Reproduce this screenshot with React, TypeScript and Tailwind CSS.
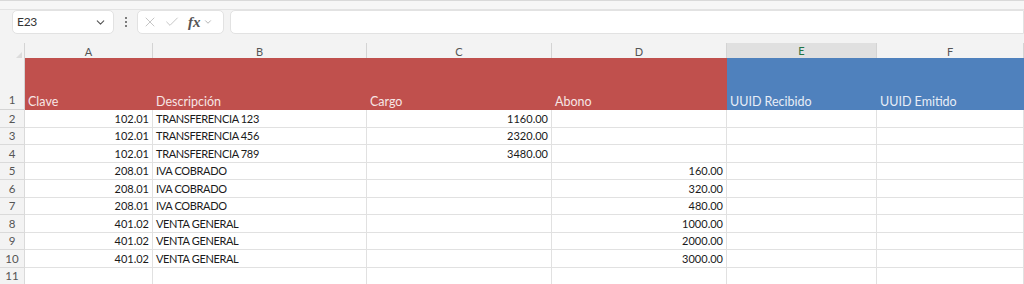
import { ChevronDown, X, Check } from "lucide-react";

type Row = {
  n: number;
  clave?: string;
  desc?: string;
  cargo?: string;
  abono?: string;
};

const rows: Row[] = [
  { n: 2, clave: "102.01", desc: "TRANSFERENCIA 123", cargo: "1160.00" },
  { n: 3, clave: "102.01", desc: "TRANSFERENCIA 456", cargo: "2320.00" },
  { n: 4, clave: "102.01", desc: "TRANSFERENCIA 789", cargo: "3480.00" },
  { n: 5, clave: "208.01", desc: "IVA COBRADO", abono: "160.00" },
  { n: 6, clave: "208.01", desc: "IVA COBRADO", abono: "320.00" },
  { n: 7, clave: "208.01", desc: "IVA COBRADO", abono: "480.00" },
  { n: 8, clave: "401.02", desc: "VENTA GENERAL", abono: "1000.00" },
  { n: 9, clave: "401.02", desc: "VENTA GENERAL", abono: "2000.00" },
  { n: 10, clave: "401.02", desc: "VENTA GENERAL", abono: "3000.00" },
  { n: 11 },
];

const cols = ["A", "B", "C", "D", "E", "F"];

// row numbers, A, B, C, D, E, F
const gridCols = "grid grid-cols-[25px_128px_214px_185px_175px_150px_1fr]";

function Cell({ children, right, tight }: { children?: React.ReactNode; right?: boolean; tight?: boolean }) {
  return (
    <div
      className={`h-[17.5px] border-b border-r border-[#e1e1e1] bg-white px-[3px] flex items-center text-[11px] leading-none text-[#1a1a1a] whitespace-nowrap overflow-hidden ${
        right ? "justify-end" : ""
      } ${tight ? "tracking-[-0.35px]" : ""}`}
    >
      {children}
    </div>
  );
}

export default function App() {
  return (
    <div className="w-[1024px] h-[284px] overflow-hidden bg-[#f3f3f3] font-['Lato','Liberation_Sans',sans-serif]">
      {/* ribbon edge */}
      <div className="h-[10px] border-t border-[#d9d9d9] bg-[#f6f6f6] border-b border-b-[#e3e3e3]" />

      {/* formula bar */}
      <div className="flex items-center h-[24px] pl-[12px]">
        <div className="w-[102px] h-[24px] bg-white border border-[#e2e2e2] rounded-[5px] flex items-center justify-between pl-[4px] pr-[6px]">
          <span className="text-[12px] text-[#333] tracking-[-0.3px]">E23</span>
          <ChevronDown className="w-[13px] h-[13px] text-[#555]" strokeWidth={2} />
        </div>
        <div className="w-[23px] flex flex-col items-center justify-center gap-[2px]">
          <span className="w-[2px] h-[2px] bg-[#555] rounded-full" />
          <span className="w-[2px] h-[2px] bg-[#555] rounded-full" />
          <span className="w-[2px] h-[2px] bg-[#555] rounded-full" />
        </div>
        <div className="w-[87px] h-[24px] bg-white border border-[#e2e2e2] rounded-[5px] flex items-center pl-[4px] gap-[6px]">
          <X className="w-[16px] h-[16px] text-[#bdbdbd]" strokeWidth={1.3} />
          <Check className="w-[16px] h-[16px] text-[#bdbdbd]" strokeWidth={1.3} />
          <span className="font-['Liberation_Serif',serif] italic font-bold text-[15px] text-[#555] leading-none ml-[2px]">
            fx
          </span>
          <ChevronDown className="w-[10px] h-[10px] text-[#888] -ml-[4px]" strokeWidth={1.5} />
        </div>
        <div className="ml-[6px] flex-1 h-[24px] bg-white border border-[#e2e2e2] rounded-l-[5px]" />
      </div>

      {/* sheet */}
      <div className="mt-[9px]">
        {/* column headers */}
        <div className={`${gridCols} h-[15px]`}>
          <div className="border-r border-b border-[#d4d4d4] bg-[#f3f3f3] flex items-end justify-end pr-[2px] pb-[2px]">
            <div className="w-0 h-0 border-l-[7px] border-l-transparent border-b-[7px] border-b-[#dcdcdc]" />
          </div>
          {cols.map((c) => (
            <div
              key={c}
              className={
                c === "E"
                  ? "bg-[#e0e0e0] border-r border-[#d4d4d4] border-b-2 border-b-[#217346] flex items-center justify-center text-[11px] text-[#217346]"
                  : "bg-[#f3f3f3] border-r border-b border-[#d4d4d4] flex items-center justify-center text-[11px] text-[#555]"
              }
            >
              {c}
            </div>
          ))}
        </div>

        {/* row 1 */}
        <div className={`${gridCols} h-[52px]`}>
          <div className="bg-[#f3f3f3] border-r border-b border-[#d4d4d4] flex items-end justify-center pb-[1px] text-[11.5px] text-[#555]">
            1
          </div>
          <div className="col-span-4 bg-[#c0504d] grid grid-cols-[128px_214px_185px_175px] text-[12.5px] leading-[16px] text-[#f7e6e5] items-end">
            <span className="pl-[3px]">Clave</span>
            <span className="pl-[3px]">Descripción</span>
            <span className="pl-[3px]">Cargo</span>
            <span className="pl-[3px]">Abono</span>
          </div>
          <div className="col-span-2 bg-[#4f81bd] grid grid-cols-[150px_1fr] text-[12.5px] leading-[16px] text-[#e8eef7] items-end">
            <span className="pl-[3px]">UUID Recibido</span>
            <span className="pl-[3px]">UUID Emitido</span>
          </div>
        </div>

        {/* data rows */}
        {rows.map((r) => (
          <div key={r.n} className={gridCols}>
            <div className="h-[17.5px] bg-[#f3f3f3] border-r border-b border-[#dadada] flex items-center justify-center text-[11.5px] text-[#555]">
              {r.n}
            </div>
            <Cell right>{r.clave}</Cell>
            <Cell tight>{r.desc}</Cell>
            <Cell right>{r.cargo}</Cell>
            <Cell right>{r.abono}</Cell>
            <Cell />
            <Cell />
          </div>
        ))}
      </div>
    </div>
  );
}
